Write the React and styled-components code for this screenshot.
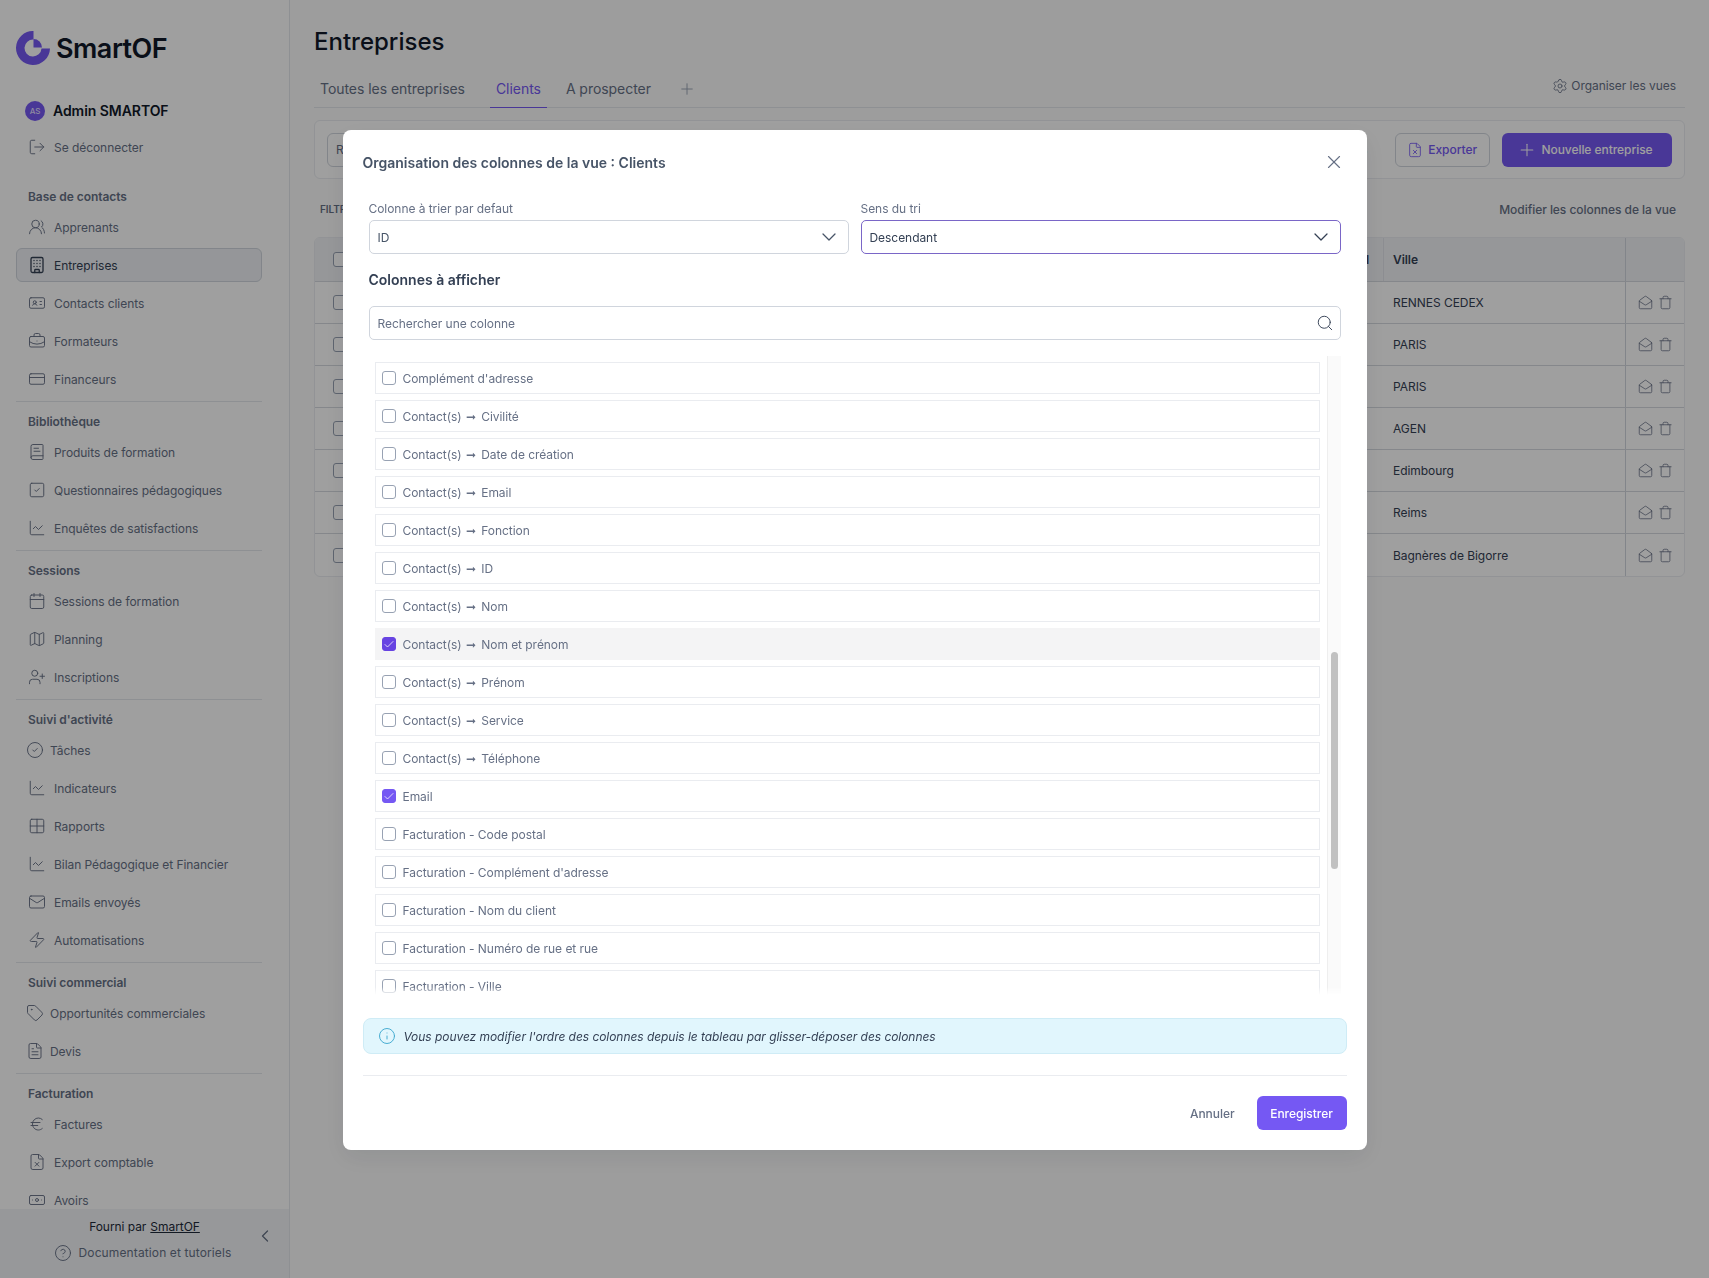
import React from 'react'
import styled, { createGlobalStyle } from 'styled-components'
import {
  LogOut, UsersRound, Building, IdCard, BriefcaseBusiness, CreditCard, BookText, SquareCheck,
  ChartLine, Calendar, Map, UserPlus, CircleCheck, Grid2x2, Mail, Zap, Tag, FileText, Euro,
  FileX, Banknote, CircleHelp, ChevronLeft, ChevronDown, Settings, Plus, X, Search, Info,
  MailOpen, Trash, Check,
} from 'lucide-react'

const purple = '#7558f3'

const navGroups = [
  { title: 'Base de contacts', items: [
    { icon: UsersRound, label: 'Apprenants' },
    { icon: Building, label: 'Entreprises', active: true },
    { icon: IdCard, label: 'Contacts clients' },
    { icon: BriefcaseBusiness, label: 'Formateurs' },
    { icon: CreditCard, label: 'Financeurs' },
  ] },
  { title: 'Bibliothèque', items: [
    { icon: BookText, label: 'Produits de formation' },
    { icon: SquareCheck, label: 'Questionnaires pédagogiques' },
    { icon: ChartLine, label: 'Enquêtes de satisfactions' },
  ] },
  { title: 'Sessions', items: [
    { icon: Calendar, label: 'Sessions de formation' },
    { icon: Map, label: 'Planning' },
    { icon: UserPlus, label: 'Inscriptions' },
  ] },
  { title: "Suivi d'activité", items: [
    { icon: CircleCheck, label: 'Tâches', tight: true },
    { icon: ChartLine, label: 'Indicateurs' },
    { icon: Grid2x2, label: 'Rapports' },
    { icon: ChartLine, label: 'Bilan Pédagogique et Financier' },
    { icon: Mail, label: 'Emails envoyés' },
    { icon: Zap, label: 'Automatisations' },
  ] },
  { title: 'Suivi commercial', items: [
    { icon: Tag, label: 'Opportunités commerciales', tight: true },
    { icon: FileText, label: 'Devis', tight: true },
  ] },
  { title: 'Facturation', items: [
    { icon: Euro, label: 'Factures' },
    { icon: FileX, label: 'Export comptable' },
    { icon: Banknote, label: 'Avoirs' },
  ] },
]

const cities = ['RENNES CEDEX', 'PARIS', 'PARIS', 'AGEN', 'Edimbourg', 'Reims', 'Bagnères de Bigorre']

const columns = [
  { label: "Complément d'adresse" },
  { contact: 'Civilité' },
  { contact: 'Date de création' },
  { contact: 'Email' },
  { contact: 'Fonction' },
  { contact: 'ID' },
  { contact: 'Nom' },
  { contact: 'Nom et prénom', checked: true, hovered: true },
  { contact: 'Prénom' },
  { contact: 'Service' },
  { contact: 'Téléphone' },
  { label: 'Email', checked: true },
  { label: 'Facturation - Code postal' },
  { label: "Facturation - Complément d'adresse" },
  { label: 'Facturation - Nom du client' },
  { label: 'Facturation - Numéro de rue et rue' },
  { label: 'Facturation - Ville' },
]

const GlobalStyle = createGlobalStyle`
  html, body { margin: 0; padding: 0; height: 100%; }
  body { font-family: Inter, "Liberation Sans", sans-serif; color: #344054; background: #fcfcfc; overflow: hidden; letter-spacing: -0.05px; }
  * { box-sizing: border-box; }
`

const Page = styled.div`
  display: flex;
  height: 1278px;
`

const Sidebar = styled.aside`
  width: 290px;
  flex-shrink: 0;
  display: flex;
  flex-direction: column;
  background: #fff;
  border-right: 1px solid #e4e7ec;
`

const SideScroll = styled.div`
  flex: 1;
  min-height: 0;
  overflow: hidden;
  padding-top: 30px;
`

const LogoRow = styled.div`
  display: flex;
  align-items: center;
  height: 36px;
  margin: 0 0 27px 16px;
  gap: 6px;
`

const LogoText = styled.span`
  font-size: 27px;
  font-weight: 600;
  letter-spacing: -0.5px;
  color: #101828;
`

const UserRow = styled.div`
  display: flex;
  align-items: center;
  gap: 8px;
  height: 35px;
  padding-left: 25px;
  font-size: 14px;
  font-weight: 600;
  color: #101828;
`

const Avatar = styled.span`
  width: 20px;
  height: 20px;
  border-radius: 50%;
  background: ${purple};
  color: #e4dfff;
  font-size: 8px;
  font-weight: 500;
  display: flex;
  align-items: center;
  justify-content: center;
`

const NavGroup = styled.div`
  margin-top: ${p => (p.$first ? '20px' : '0')};
  padding-top: ${p => (p.$first ? '0' : '9px')};
`

const NavTitle = styled.div`
  height: 22px;
  line-height: 22px;
  padding-left: 28px;
  font-size: 12px;
  font-weight: 600;
  color: #667085;
`

const NavList = styled.div`
  display: flex;
  flex-direction: column;
  gap: 4px;
  padding: 2px 0;
`

const NavItem = styled.div`
  display: flex;
  align-items: center;
  height: 34px;
  margin: 0 27px 0 16px;
  padding-left: ${p => (p.$tight ? '9px' : '11px')};
  gap: ${p => (p.$tight ? '6px' : '8px')};
  font-size: 12px;
  color: ${p => (p.$active ? '#344054' : '#667085')};
  background: ${p => (p.$active ? '#eff1f5' : 'transparent')};
  border: 1px solid ${p => (p.$active ? '#d0d5dd' : 'transparent')};
  border-radius: 6px;
  white-space: nowrap;
`

const Divider = styled.div`
  height: 1px;
  margin: 3px 27px 0 16px;
  background: #e4e7ec;
`

const SideFooter = styled.div`
  position: relative;
  flex-shrink: 0;
  height: 69px;
  padding-top: 9px;
  background: #f2f4f7;
  text-align: center;
  font-size: 12px;
`

const FooterLine = styled.div`
  height: 18px;
  line-height: 18px;
  color: ${p => (p.$muted ? '#667085' : '#1d2939')};
  letter-spacing: ${p => (p.$muted ? '0.12px' : '-0.05px')};
  margin-bottom: 8px;
  padding-right: ${p => (p.$muted ? '4px' : '0')};
  display: flex;
  align-items: center;
  justify-content: center;
  gap: 7px;
  a { color: inherit; margin-left: -3px; }
`

const Collapse = styled.span`
  position: absolute;
  right: 14px;
  top: 17px;
  color: #667085;
  display: flex;
`

const Main = styled.main`
  flex: 1;
  min-width: 0;
  padding: 26px 24px 0 24px;
`

const PageTitle = styled.h1`
  margin: 0;
  font-size: 24px;
  line-height: 32px;
  font-weight: 500;
  letter-spacing: 0;
  color: #101828;
`

const TabBar = styled.div`
  display: flex;
  align-items: flex-end;
  height: 50px;
  gap: 13px;
  border-bottom: 1px solid #e4e7ec;
`

const Tab = styled.div`
  padding: 0 6px 8px;
  line-height: 20px;
  font-size: 14px;
  margin-bottom: -1px;
  margin-right: ${p => (p.$wide ? '6px' : '0')};
  color: ${p => (p.$active ? purple : '#667085')};
  border-bottom: 1px solid ${p => (p.$active ? purple : 'transparent')};
`

const AddTab = styled.div`
  display: flex;
  margin: 0 0 9px 8px;
  color: #98a2b3;
`

const ViewsLink = styled.div`
  margin: 0 9px 12px auto;
  display: flex;
  align-items: center;
  gap: 3px;
  font-size: 12px;
  line-height: 18px;
  color: #667085;
`

const Toolbar = styled.div`
  display: flex;
  align-items: center;
  height: 59px;
  margin-top: 12px;
  padding: 0 12px;
  background: #fff;
  border: 1px solid #eaecf0;
  border-radius: 6px;
`

const FakeInput = styled.div`
  width: 340px;
  height: 34px;
  line-height: 32px;
  padding-left: 8px;
  font-size: 12px;
  color: #667085;
  border: 1px solid #d0d5dd;
  border-radius: 6px;
`

const ToolbarNote = styled.span`
  margin-left: auto;
  margin-right: 28px;
  font-size: 12px;
  color: #667085;
`

const GhostButton = styled.div`
  display: flex;
  align-items: center;
  gap: 5px;
  height: 34px;
  padding: 0 12px 0 11px;
  margin-right: 12px;
  font-size: 12px;
  font-weight: 500;
  color: ${purple};
  border: 1px solid #d0d5dd;
  border-radius: 6px;
`

const PrimaryButton = styled.div`
  display: flex;
  align-items: center;
  justify-content: center;
  gap: ${p => p.$gap || 0};
  width: ${p => p.$width};
  height: 34px;
  padding-right: ${p => p.$shift || 0};
  font-size: 12px;
  font-weight: 500;
  color: #fff;
  background: ${purple};
  border-radius: 6px;
`

const FilterRow = styled.div`
  display: flex;
  align-items: center;
  justify-content: space-between;
  height: 20px;
  margin: 20px 9px 18px 6px;
`

const FilterLabel = styled.span`
  font-size: 10px;
  font-weight: 600;
  color: #667085;
`

const FilterLink = styled.span`
  font-size: 12px;
  font-weight: 500;
  color: #667085;
`

const Table = styled.div`
  border: 1px solid #eaecf0;
  border-radius: 6px;
  overflow: hidden;
  background: #fff;
`

const TableRow = styled.div`
  display: flex;
  height: ${p => (p.$head ? '44px' : '42px')};
  background: ${p => (p.$head ? '#f0f2f6' : 'transparent')};
  border-bottom: 1px solid #d5d9df;
  &:last-child { border-bottom: 0; }
  font-size: 12px;
  color: #344054;
  font-weight: ${p => (p.$head ? 600 : 400)};
`

const CheckCell = styled.div`
  width: 48px;
  padding-left: 18px;
  display: flex;
  align-items: center;
`

const FillCell = styled.div`
  flex: 1;
  display: flex;
  align-items: center;
  justify-content: flex-end;
  padding-right: 14px;
`

const VilleCell = styled.div`
  width: 242px;
  display: flex;
  align-items: center;
  padding-left: 9px;
  border-left: ${p => (p.$head ? '1px solid #e0e3e9' : '1px solid transparent')};
`

const ActionCell = styled.div`
  width: 59px;
  display: flex;
  align-items: center;
  justify-content: center;
  gap: 5px;
  color: #667085;
  border-left: 1px solid #d0d5dd;
`

const Box = styled.span`
  width: ${p => p.$size || '14px'};
  height: ${p => p.$size || '14px'};
  flex-shrink: 0;
  display: flex;
  align-items: center;
  justify-content: center;
  border-radius: 3px;
  border: 1px solid ${p => (p.$checked ? p.$color : '#98a2b3')};
  background: ${p => (p.$checked ? p.$color : '#fff')};
  color: #fff;
`

const Overlay = styled.div`
  position: fixed;
  inset: 0;
  display: flex;
  align-items: flex-start;
  justify-content: center;
  padding-top: 130px;
  background: rgba(0, 0, 0, 0.375);
`

const Modal = styled.div`
  width: 1024px;
  padding: 20px;
  background: #fff;
  border-radius: 8px;
  box-shadow: 0 8px 24px rgba(16, 24, 40, 0.08);
`

const ModalHead = styled.div`
  display: flex;
  align-items: center;
  justify-content: space-between;
  height: 24px;
`

const ModalTitle = styled.h2`
  margin: 0;
  font-size: 14px;
  font-weight: 600;
  letter-spacing: 0;
  color: #475467;
`

const CloseIcon = styled.span`
  display: flex;
  padding-right: 2px;
  color: #667085;
`

const ModalBody = styled.div`
  padding: 27px 6px 0;
`

const FieldRow = styled.div`
  display: grid;
  grid-template-columns: 480px 480px;
  gap: 12px;
`

const FieldLabel = styled.div`
  font-size: 12px;
  line-height: 16px;
  margin-bottom: 3px;
  color: #667085;
`

const SelectBox = styled.div`
  display: flex;
  align-items: center;
  justify-content: space-between;
  height: 34px;
  padding: 0 7px 0 8px;
  font-size: 12px;
  color: ${p => (p.$focused ? '#344054' : '#475467')};
  border: 1px solid ${p => (p.$focused ? '#7a66c7' : '#d0d5dd')};
  border-radius: 5px;
  background: #fff;
`

const SectionTitle = styled.h3`
  margin: 16px 0 16px;
  height: 20px;
  line-height: 20px;
  font-size: 14px;
  font-weight: 600;
  letter-spacing: 0;
  color: #344054;
`

const SearchBox = styled(SelectBox)`
  color: #667085;
  padding-right: 6px;
`

const ListWrap = styled.div`
  display: flex;
  gap: 7px;
  height: 639px;
  margin-top: 16px;
  overflow: hidden;
  mask-image: linear-gradient(#000 calc(100% - 8px), transparent);
`

const ColumnList = styled.div`
  flex: 1;
  min-width: 0;
  padding: 6px 0 0 6px;
  display: flex;
  flex-direction: column;
  gap: 6px;
`

const ColumnRow = styled.div`
  flex-shrink: 0;
  display: flex;
  align-items: center;
  gap: 7px;
  height: 32px;
  padding-left: 6px;
  font-size: 12px;
  color: #667085;
  border: 1px solid ${p => (p.$hovered ? '#f4f4f5' : '#eaecf0')};
  background: ${p => (p.$hovered ? '#f4f4f5' : '#fff')};
`

const Arrow = styled.span`
  margin: 0 1.5px;
`

const Track = styled.div`
  width: 14px;
  padding-left: 3px;
  background: #fafafa;
  border-left: 1px solid #eeeeee;
`

const Thumb = styled.div`
  width: 7px;
  height: 217px;
  margin-top: 296px;
  border-radius: 4px;
  background: #c1c1c1;
`

const InfoBox = styled.div`
  display: flex;
  align-items: center;
  gap: 8px;
  height: 36px;
  margin-top: 23px;
  padding-left: 14px;
  font-size: 12px;
  font-style: italic;
  color: #344054;
  background: #e1f6fd;
  border: 1px solid #cfecf6;
  border-radius: 8px;
`

const InfoIcon = styled.span`
  display: flex;
  color: #3fa9cf;
`

const ModalRule = styled.div`
  height: 1px;
  margin-top: 21px;
  background: #eaecf0;
`

const ModalFooter = styled.div`
  display: flex;
  align-items: center;
  justify-content: flex-end;
  gap: 22px;
  margin-top: 20px;
`

const CancelLink = styled.span`
  font-size: 12px;
  font-weight: 500;
  color: #667085;
`

const Logo = () => (
  <svg width="34" height="34" viewBox="0 0 34 34" fill="none">
    <path d="M17.5 0A17 17 0 1 0 34 17.5H25.5A8.5 8.5 0 1 1 17.5 8.5Z" fill={purple} />
    <path d="M17.5 8V16.5H26A8.5 8.5 0 0 0 17.5 8Z" fill={purple} />
  </svg>
)

const App = () => (
  <>
    <GlobalStyle />
    <Page>
      <Sidebar>
        <SideScroll>
          <LogoRow><Logo /><LogoText>SmartOF</LogoText></LogoRow>
          <UserRow><Avatar>AS</Avatar>Admin SMARTOF</UserRow>
          <NavList>
            <NavItem><LogOut size={18} strokeWidth={1.25} />Se déconnecter</NavItem>
          </NavList>
          {navGroups.map((group, i) => (
            <React.Fragment key={group.title}>
              {i > 0 && <Divider />}
              <NavGroup $first={i === 0}>
                <NavTitle>{group.title}</NavTitle>
                <NavList>
                  {group.items.map(({ icon: Icon, label, active, tight }) => (
                    <NavItem key={label} $active={active} $tight={tight}>
                      <Icon size={18} strokeWidth={active ? 1.75 : 1.25} />
                      {label}
                    </NavItem>
                  ))}
                </NavList>
              </NavGroup>
            </React.Fragment>
          ))}
        </SideScroll>
        <SideFooter>
          <FooterLine>Fourni par <a href="#smartof">SmartOF</a></FooterLine>
          <FooterLine $muted><CircleHelp size={18} strokeWidth={1.25} />Documentation et tutoriels</FooterLine>
          <Collapse><ChevronLeft size={20} strokeWidth={1.5} /></Collapse>
        </SideFooter>
      </Sidebar>

      <Main>
        <PageTitle>Entreprises</PageTitle>
        <TabBar>
          <Tab $wide>Toutes les entreprises</Tab>
          <Tab $active>Clients</Tab>
          <Tab>A prospecter</Tab>
          <AddTab><Plus size={18} strokeWidth={1.25} /></AddTab>
          <ViewsLink><Settings size={16} strokeWidth={1.25} />Organiser les vues</ViewsLink>
        </TabBar>
        <Toolbar>
          <FakeInput>Rechercher</FakeInput>
          <ToolbarNote>Actions groupées</ToolbarNote>
          <GhostButton><FileX size={16} strokeWidth={1.25} />Exporter</GhostButton>
          <PrimaryButton $width="170px" $gap="4px" $shift="4px"><Plus size={20} strokeWidth={1.25} />Nouvelle entreprise</PrimaryButton>
        </Toolbar>
        <FilterRow>
          <FilterLabel>FILTRES</FilterLabel>
          <FilterLink>Modifier les colonnes de la vue</FilterLink>
        </FilterRow>
        <Table>
          <TableRow $head>
            <CheckCell><Box $size="15px" /></CheckCell>
            <FillCell>Code postal</FillCell>
            <VilleCell $head>Ville</VilleCell>
            <ActionCell />
          </TableRow>
          {cities.map((city, i) => (
            <TableRow key={i}>
              <CheckCell><Box $size="15px" /></CheckCell>
              <FillCell />
              <VilleCell>{city}</VilleCell>
              <ActionCell>
                <MailOpen size={15} strokeWidth={1.25} />
                <Trash size={15} strokeWidth={1.25} />
              </ActionCell>
            </TableRow>
          ))}
        </Table>
      </Main>
    </Page>

    <Overlay>
      <Modal>
        <ModalHead>
          <ModalTitle>Organisation des colonnes de la vue : Clients</ModalTitle>
          <CloseIcon><X size={22} strokeWidth={1.25} /></CloseIcon>
        </ModalHead>
        <ModalBody>
          <FieldRow>
            <div>
              <FieldLabel>Colonne à trier par defaut</FieldLabel>
              <SelectBox>ID<ChevronDown size={24} strokeWidth={1.25} /></SelectBox>
            </div>
            <div>
              <FieldLabel>Sens du tri</FieldLabel>
              <SelectBox $focused>Descendant<ChevronDown size={24} strokeWidth={1.25} /></SelectBox>
            </div>
          </FieldRow>
          <SectionTitle>Colonnes à afficher</SectionTitle>
          <SearchBox>Rechercher une colonne<Search size={18} strokeWidth={1.25} color="#344054" /></SearchBox>
          <ListWrap>
            <ColumnList>
              {columns.map(col => (
                <ColumnRow key={col.contact || col.label} $hovered={col.hovered}>
                  <Box $checked={col.checked} $color={col.hovered ? '#6743e2' : purple}>
                    {col.checked && <Check size={13} strokeWidth={1.5} />}
                  </Box>
                  {col.contact ? <span>Contact(s) <Arrow>➞</Arrow> {col.contact}</span> : col.label}
                </ColumnRow>
              ))}
            </ColumnList>
            <Track><Thumb /></Track>
          </ListWrap>
        </ModalBody>
        <InfoBox>
          <InfoIcon><Info size={18} strokeWidth={1.25} /></InfoIcon>
          Vous pouvez modifier l'ordre des colonnes depuis le tableau par glisser-déposer des colonnes
        </InfoBox>
        <ModalRule />
        <ModalFooter>
          <CancelLink>Annuler</CancelLink>
          <PrimaryButton $width="90px">Enregistrer</PrimaryButton>
        </ModalFooter>
      </Modal>
    </Overlay>
  </>
)

export default App
